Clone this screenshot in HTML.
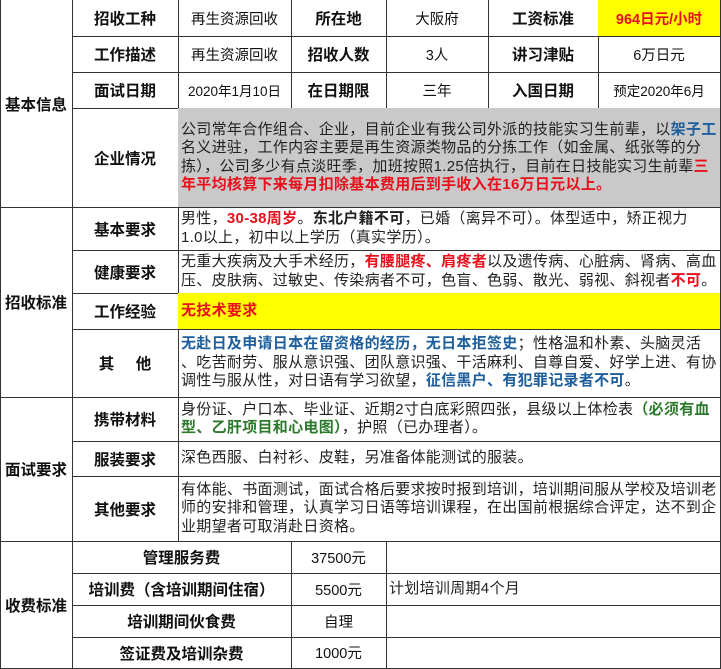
<!DOCTYPE html>
<html><head><meta charset="utf-8"><style>
body{margin:0;width:721px;height:668px;background:#fff;position:relative;overflow:hidden;font-family:"Liberation Sans","Noto Sans CJK SC",sans-serif;color:#111}
.c{position:absolute;box-sizing:border-box;border-right:1px solid #333;border-bottom:1px solid #333;display:flex;align-items:center;justify-content:center;font-size:14.5px;white-space:nowrap;overflow:hidden}
.b{font-weight:bold;font-size:15.5px}
.t{justify-content:flex-start;padding-left:3px;line-height:18.5px;font-size:15px;letter-spacing:0.3px;color:#222}
.r{color:#e8101c;font-weight:bold}
.bl{color:#1d5e9c;font-weight:bold}
.g{color:#2d7a2d;font-weight:bold}
</style></head><body>
<div style="position:absolute;left:0;top:0;width:1px;height:668px;background:#333"></div>
<div class="c b" style="left:0;top:0;width:73px;height:208px">基本信息</div>
<div class="c b" style="left:0;top:207px;width:73px;height:191px">招收标准</div>
<div class="c b" style="left:0;top:397px;width:73px;height:145px">面试要求</div>
<div class="c b" style="left:0;top:541px;width:73px;height:128px">收费标准</div>
<div class="c b" style="left:72px;top:0;width:107px;height:37px">招收工种</div>
<div class="c" style="left:178px;top:0;width:114px;height:37px">再生资源回收</div>
<div class="c b" style="left:291px;top:0;width:96px;height:37px">所在地</div>
<div class="c" style="left:386px;top:0;width:103px;height:37px">大阪府</div>
<div class="c b" style="left:488px;top:0;width:111px;height:37px">工资标准</div>
<div class="c" style="left:598px;top:0;width:123px;height:37px;background:#ffff00;color:#e8101c;font-weight:bold">964日元/小时</div>
<div class="c b" style="left:72px;top:36px;width:107px;height:37px">工作描述</div>
<div class="c" style="left:178px;top:36px;width:114px;height:37px">再生资源回收</div>
<div class="c b" style="left:291px;top:36px;width:96px;height:37px">招收人数</div>
<div class="c" style="left:386px;top:36px;width:103px;height:37px">3人</div>
<div class="c b" style="left:488px;top:36px;width:111px;height:37px">讲习津贴</div>
<div class="c" style="left:598px;top:36px;width:123px;height:37px">6万日元</div>
<div class="c b" style="left:72px;top:72px;width:107px;height:37px">面试日期</div>
<div class="c" style="left:178px;top:72px;width:114px;height:37px;font-size:13.5px">2020年1月10日</div>
<div class="c b" style="left:291px;top:72px;width:96px;height:37px">在日期限</div>
<div class="c" style="left:386px;top:72px;width:103px;height:37px">三年</div>
<div class="c b" style="left:488px;top:72px;width:111px;height:37px">入国日期</div>
<div class="c" style="left:598px;top:72px;width:123px;height:37px;font-size:13.5px">预定2020年6月</div>
<div class="c b" style="left:72px;top:108px;width:107px;height:100px">企业情况</div>
<div class="c t" style="left:178px;top:108px;width:543px;height:100px;background:#c9c9c9"><div>公司常年合作组合、企业，目前企业有我公司外派的技能实习生前辈，以<span class="bl">架子工</span><br>名义进驻，工作内容主要是再生资源类物品的分拣工作（如金属、纸张等的分<br>拣），公司多少有点淡旺季，加班按照1.25倍执行，目前在日技能实习生前辈<span class="r">三</span><br><span class="r">年平均核算下来每月扣除基本费用后到手收入在16万日元以上。</span></div></div>
<div class="c b" style="left:72px;top:207px;width:107px;height:44px">基本要求</div>
<div class="c t" style="left:178px;top:207px;width:543px;height:44px"><div>男性，<span class="r">30-38周岁</span>。<b>东北户籍不可</b>，已婚（离异不可）。体型适中，矫正视力<br>1.0以上，初中以上学历（真实学历）。</div></div>
<div class="c b" style="left:72px;top:250px;width:107px;height:44px">健康要求</div>
<div class="c t" style="left:178px;top:250px;width:543px;height:44px"><div>无重大疾病及大手术经历，<span class="r">有腰腿疼、肩疼者</span>以及遗传病、心脏病、肾病、高血<br>压、皮肤病、过敏史、传染病者不可，色盲、色弱、散光、弱视、斜视者<span class="r">不可</span>。</div></div>
<div class="c b" style="left:72px;top:293px;width:107px;height:37px">工作经验</div>
<div class="c t" style="left:178px;top:293px;width:543px;height:37px;background:#ffff00"><span class="r">无技术要求</span></div>
<div class="c b" style="left:72px;top:329px;width:107px;height:69px">其&nbsp;&nbsp;&nbsp;&nbsp;&nbsp;他</div>
<div class="c t" style="left:178px;top:329px;width:543px;height:69px"><div><span class="bl">无赴日及申请日本在留资格的经历，无日本拒签史</span>；性格温和朴素、头脑灵活<br>、吃苦耐劳、服从意识强、团队意识强、干活麻利、自尊自爱、好学上进、有协<br>调性与服从性，对日语有学习欲望，<span class="bl">征信黑户、有犯罪记录者不可</span>。</div></div>
<div class="c b" style="left:72px;top:397px;width:107px;height:45px">携带材料</div>
<div class="c t" style="left:178px;top:397px;width:543px;height:45px"><div>身份证、户口本、毕业证、近期2寸白底彩照四张，县级以上体检表<span class="g">（必须有血</span><br><span class="g">型、乙肝项目和心电图）</span>，护照（已办理者）。</div></div>
<div class="c b" style="left:72px;top:441px;width:107px;height:36px">服装要求</div>
<div class="c t" style="left:178px;top:441px;width:543px;height:36px">深色西服、白衬衫、皮鞋，另准备体能测试的服装。</div>
<div class="c b" style="left:72px;top:476px;width:107px;height:66px">其他要求</div>
<div class="c t" style="left:178px;top:476px;width:543px;height:66px"><div>有体能、书面测试，面试合格后要求按时报到培训，培训期间服从学校及培训老<br>师的安排和管理，认真学习日语等培训课程，在出国前根据综合评定，达不到企<br>业期望者可取消赴日资格。</div></div>
<div class="c b" style="left:72px;top:541px;width:220px;height:33px">管理服务费</div>
<div class="c" style="left:291px;top:541px;width:96px;height:33px">37500元</div>
<div class="c" style="left:386px;top:541px;width:335px;height:33px"></div>
<div class="c b" style="left:72px;top:573px;width:220px;height:33px">培训费（含培训期间住宿）</div>
<div class="c" style="left:291px;top:573px;width:96px;height:33px">5500元</div>
<div class="c t" style="left:386px;top:573px;width:335px;height:33px">计划培训周期4个月</div>
<div class="c b" style="left:72px;top:605px;width:220px;height:33px">培训期间伙食费</div>
<div class="c" style="left:291px;top:605px;width:96px;height:33px">自理</div>
<div class="c" style="left:386px;top:605px;width:335px;height:33px"></div>
<div class="c b" style="left:72px;top:637px;width:220px;height:32px">签证费及培训杂费</div>
<div class="c" style="left:291px;top:637px;width:96px;height:32px">1000元</div>
<div class="c" style="left:386px;top:637px;width:335px;height:32px"></div>
</body></html>
